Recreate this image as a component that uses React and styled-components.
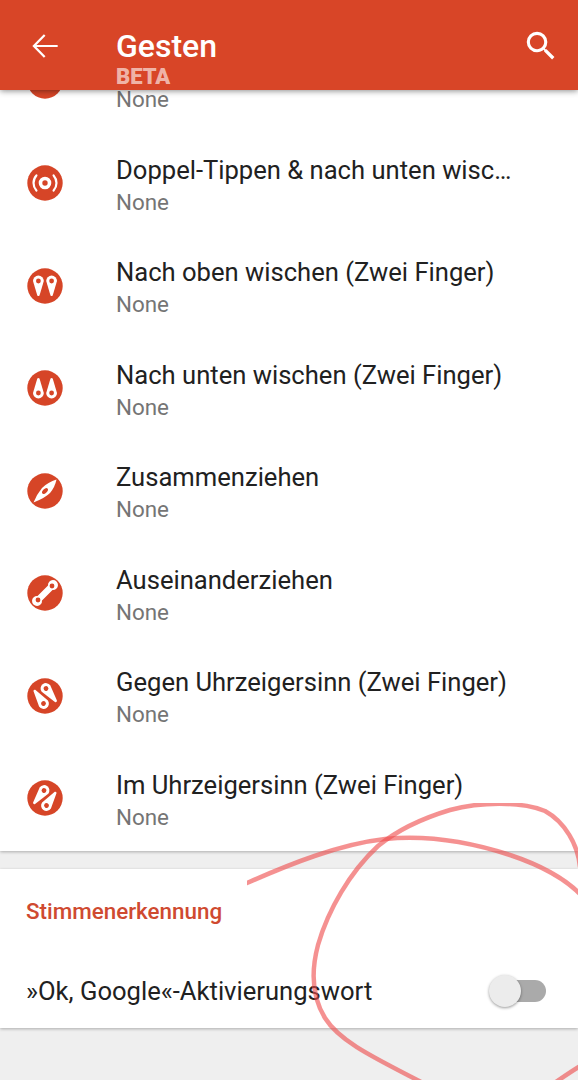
import styled, { createGlobalStyle } from 'styled-components';

const RED = '#d64527';

const GlobalStyle = createGlobalStyle`
  html, body {
    margin: 0;
    padding: 0;
    background: #efefef;
  }
  body {
    font-family: Roboto, "Liberation Sans", sans-serif;
  }
`

const Page = styled.div`
  position: relative;
  width: 578px;
  height: 1080px;
  overflow: hidden;
  background: #efefef;
`

const Header = styled.header`
  position: relative;
  z-index: 2;
  height: 90px;
  box-sizing: border-box;
  padding: 27px 18px 0 26px;
  display: flex;
  align-items: flex-start;
  background: #d84527;
  box-shadow: 0 1px 6px rgba(0, 0, 0, 0.45);
  color: #fff;
`

const IconSlot = styled.div`
  width: 38px;
  height: 38px;
  flex: none;
  svg { display: block; }
`

const Titles = styled.div`
  flex: 1;
  padding-left: 52px;
`

const Title = styled.div`
  font-size: 32px;
  line-height: 38px;
  font-weight: 500;
`

const Beta = styled.div`
  padding-top: 1px;
  font-size: 22px;
  line-height: 22px;
  font-weight: 900;
  color: rgba(255, 255, 255, 0.62);
`

const Card = styled.section`
  background: #fff;
  box-shadow: 0 1px 3px rgba(0, 0, 0, 0.28);
`

const GestureCard = styled(Card)`
  margin-top: -59px;
  padding-bottom: 0;
`

const Row = styled.div`
  height: 102.5px;
  display: flex;
  align-items: center;
  padding: 0 60px 0 27px;
`

const RoundIcon = styled.svg`
  width: 36px;
  height: 36px;
  flex: none;
  margin-right: 53px;
  margin-top: -3px;
`

const RowText = styled.div`
  min-width: 0;
  flex: 1;
`

const RowTitle = styled.div`
  padding-top: 1px;
  min-height: 33px;
  font-size: 25.6px;
  line-height: 33px;
  color: #212121;
  white-space: nowrap;
  overflow: hidden;
  text-overflow: ellipsis;
`

const RowSub = styled.div`
  font-size: 22.4px;
  line-height: 30px;
  color: #757575;
`

const VoiceCard = styled(Card)`
  margin-top: 18px;
  height: 159px;
  padding: 0 32px 0 26px;
  box-sizing: border-box;
`

const SectionLabel = styled.div`
  padding-top: 28px;
  font-size: 22.4px;
  line-height: 28px;
  font-weight: 500;
  color: #cf4a30;
`

const ToggleRow = styled.div`
  margin-top: 46px;
  display: flex;
  align-items: center;
  justify-content: space-between;
`

const ToggleLabel = styled.div`
  font-size: 25.6px;
  line-height: 40px;
  color: #212121;
`

const Switch = styled.div`
  position: relative;
  width: 54px;
  height: 22px;
  border-radius: 11px;
  background: #aaaaaa;
`

const Thumb = styled.span`
  position: absolute;
  left: -3px;
  top: -5px;
  width: 32px;
  height: 32px;
  border-radius: 50%;
  background: #ececec;
  box-shadow: 0 1px 3px rgba(0, 0, 0, 0.4);
`

const Scribble = styled.svg`
  position: absolute;
  z-index: 3;
  left: 0;
  top: 0;
  pointer-events: none;
`

// teardrop from a round head (hx,hy) to a point (tx,ty), with a hole in the head
const Drop = ({ hx, hy, tx, ty, r = 5.4, hole = 2.4 }) => {
  const len = Math.hypot(tx - hx, ty - hy);
  const angle = (Math.atan2(ty - hy, tx - hx) * 180) / Math.PI - 90;
  return (
    <g transform={`translate(${hx} ${hy}) rotate(${angle})`}>
      <path d={`M${-r} 0A${r} ${r} 0 1 1 ${r} 0L1.1 ${len - 0.6}Q0 ${len + 0.6} -1.1 ${len - 0.6}Z`} fill="#fff" />
      <circle r={hole} fill={RED} />
    </g>
  );
};

const Badge = ({ children }) => (
  <RoundIcon viewBox="-18 -18 36 36">
    <circle r="17.7" fill={RED} />
    {children}
  </RoundIcon>
);

const icons = {
  tap: (
    <>
      <circle r="4.5" fill="none" stroke="#fff" strokeWidth="3.6" />
      <path d="M-8.6 -7.6A11.5 11.5 0 0 0 -8.6 7.6M8.6 -7.6A11.5 11.5 0 0 1 8.6 7.6" fill="none" stroke="#fff" strokeWidth="2.2" strokeLinecap="round" />
    </>
  ),
  swipeUp: (
    <>
      <Drop hx={-6.6} hy={-5} tx={-6.6} ty={10} />
      <Drop hx={6.6} hy={-5} tx={6.6} ty={10} />
    </>
  ),
  swipeDown: (
    <>
      <Drop hx={-6.6} hy={5} tx={-6.6} ty={-10} />
      <Drop hx={6.6} hy={5} tx={6.6} ty={-10} />
    </>
  ),
  pinch: (
    <>
      <path d="M11.5 -11.5Q10 -4 5 2Q0 7 -11.5 11.5Q-8 3 -3 -3Q3 -9 11.5 -11.5Z" fill="#fff" />
      <ellipse rx="3.6" ry="2" transform="rotate(-45)" fill={RED} />
    </>
  ),
  spread: (
    <>
      <path d="M-7.5 3A5 5 0 1 0 -3 7.5L7.5 -3A5 5 0 1 0 3 -7.5Z" fill="#fff" />
      <circle cx="7" cy="-7" r="2.4" fill={RED} />
      <circle cx="-7" cy="7" r="2.4" fill={RED} />
    </>
  ),
  ccw: (
    <>
      <Drop hx={1} hy={-7.5} tx={11.5} ty={6} />
      <Drop hx={-1.5} hy={7.5} tx={-11} ty={-6} />
    </>
  ),
  cw: (
    <>
      <Drop hx={-1} hy={-7.5} tx={-11.5} ty={6} />
      <Drop hx={1.5} hy={7.5} tx={11} ty={-6} />
    </>
  ),
};

// the first row is scrolled under the header, so its title can't be seen
const gestures = [
  { icon: 'tap', title: '' },
  { icon: 'tap', title: 'Doppel-Tippen & nach unten wischen' },
  { icon: 'swipeUp', title: 'Nach oben wischen (Zwei Finger)' },
  { icon: 'swipeDown', title: 'Nach unten wischen (Zwei Finger)' },
  { icon: 'pinch', title: 'Zusammenziehen' },
  { icon: 'spread', title: 'Auseinanderziehen' },
  { icon: 'ccw', title: 'Gegen Uhrzeigersinn (Zwei Finger)' },
  { icon: 'cw', title: 'Im Uhrzeigersinn (Zwei Finger)' },
];

const App = () => {
  return (
    <Page>
      <GlobalStyle />
      <Header>
        <IconSlot>
          <svg width="38" height="38" viewBox="0 0 24 24" fill="#fff">
            <path d="M20 11.3H6.6l5.7-5.7-1-1L4 12l7.3 7.4 1-1-5.7-5.7H20z" />
          </svg>
        </IconSlot>
        <Titles>
          <Title>Gesten</Title>
          <Beta>BETA</Beta>
        </Titles>
        <IconSlot>
          <svg width="38" height="38" viewBox="0 0 24 24" fill="#fff">
            <path d="M15.5 14h-.79l-.28-.27A6.47 6.47 0 0 0 16 9.5 6.5 6.5 0 1 0 9.5 16c1.61 0 3.09-.59 4.23-1.57l.27.28v.79l5 4.99L20.49 19l-4.99-5zm-6 0C7.01 14 5 11.99 5 9.5S7.01 5 9.5 5 14 7.01 14 9.5 11.99 14 9.5 14z" />
          </svg>
        </IconSlot>
      </Header>

      <GestureCard>
        {gestures.map((g, i) => (
          <Row key={i}>
            <Badge>{icons[g.icon]}</Badge>
            <RowText>
              <RowTitle>{g.title}</RowTitle>
              <RowSub>None</RowSub>
            </RowText>
          </Row>
        ))}
      </GestureCard>

      <VoiceCard>
        <SectionLabel>Stimmenerkennung</SectionLabel>
        <ToggleRow>
          <ToggleLabel>»Ok, Google«-Aktivierungswort</ToggleLabel>
          <Switch>
            <Thumb />
          </Switch>
        </ToggleRow>
      </VoiceCard>

      <Scribble width="578" height="1080" viewBox="0 0 578 1080" fill="none">
        <defs>
          <filter id="pen" x="0" y="0" width="100%" height="100%">
            <feGaussianBlur stdDeviation="0.7" />
          </filter>
        </defs>
        <g stroke="#ef4a4a" strokeOpacity="0.6" strokeWidth="4.5" strokeLinecap="round" filter="url(#pen)">
          <path d="M247 883C290 864 340 844 385 839C425 835 470 842 510 855C540 865 565 878 582 896" />
          <path d="M580 867C578 845 565 822 545 811C520 801 480 802 450 810C420 819 395 832 378 846C350 872 328 910 318 945C310 975 314 1000 325 1018C340 1042 375 1058 425 1084" />
          <path d="M553 1084C562 1078 570 1072 582 1065" />
        </g>
      </Scribble>
    </Page>
  );
}

export default App
